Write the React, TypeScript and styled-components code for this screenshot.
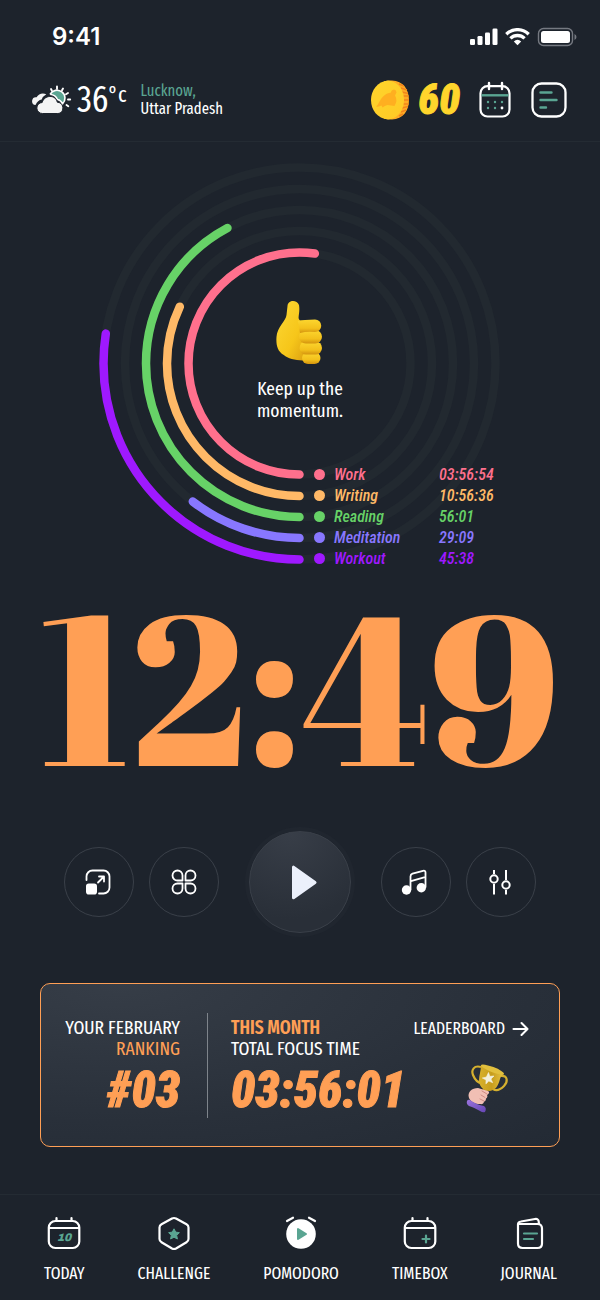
import React from "react";
import styled, { createGlobalStyle } from "styled-components";

const narrow = `"Fira Sans Extra Condensed", "Roboto Condensed", Roboto, sans-serif`;
const legendFont = `"Roboto Condensed", Roboto, sans-serif`;
const mint = "#5aa592";
const orange = "#ff9f55";
const line = "#242b33";

const GlobalStyle = createGlobalStyle`
  * { box-sizing: border-box; }
  body { margin: 0; background: #1d232c; color: #fff; font-family: ${narrow}; }
  button { margin: 0; padding: 0; border: 0; background: none; color: inherit; font: inherit; cursor: pointer; }
  a { color: inherit; text-decoration: none; }
  svg { display: block; }
  h1, p, ul, dl, dd, dt { margin: 0; padding: 0; }
`;

const Screen = styled.div`
  min-height: 100vh;
  display: flex;
  flex-direction: column;
`;

const StatusBar = styled.div`
  display: flex;
  align-items: center;
  justify-content: space-between;
  height: 72px;
  padding: 2px 22px 0 52px;
`;

const Clock = styled.time`
  font: 600 24px/28px Inter, sans-serif;
`;

const StatusIcons = styled.div`
  display: flex;
  align-items: center;
  gap: 7px;
`;

const Header = styled.header`
  display: flex;
  align-items: center;
  justify-content: space-between;
  height: 70px;
  padding: 0 33px 14px 32px;
  border-bottom: 1px solid ${line};
`;

const Weather = styled.div`
  display: flex;
  align-items: center;
`;

const Temperature = styled.span`
  display: flex;
  margin: 0 14px 0 5px;
  font-size: 36px;
  line-height: 36px;
`;

const Unit = styled.span`
  font-size: 22px;
  line-height: 26px;
`;

const Place = styled.p`
  font-size: 16px;
  line-height: 18px;
`;

const City = styled.span`
  display: block;
  color: ${mint};
`;

const HeaderActions = styled.div`
  display: flex;
  align-items: center;
`;

const Heavy = styled.span<{ $size: number; $color: string }>`
  font-family: ${legendFont};
  font-size: ${(p) => p.$size}px;
  line-height: 44px;
  font-weight: 900;
  font-style: italic;
  color: ${(p) => p.$color};
  -webkit-text-stroke: 1px ${(p) => p.$color};
`;

const Coins = styled.div`
  display: flex;
  align-items: center;
  gap: 8px;
  margin-right: 18px;
`;

const HeaderButton = styled.button`
  & + & { margin-left: 19px; }
`;

const Main = styled.main`
  display: flex;
  flex-direction: column;
  align-items: center;
  flex: 1;
`;

const Activity = styled.section`
  display: grid;
  grid-template-columns: 400px;
  margin-top: 20px;
`;

const Rings = styled.svg`
  grid-area: 1 / 1;
`;

const Message = styled.div`
  grid-area: 1 / 1;
  display: flex;
  flex-direction: column;
  align-items: center;
  gap: 12px;
  padding-top: 138px;
  text-align: center;
  font-size: 19px;
  line-height: 22px;
`;

const Legend = styled.dl`
  grid-area: 1 / 1;
  align-self: end;
  padding-left: 214px;
  font: italic 500 16px/21px ${legendFont};
`;

const LegendRow = styled.div<{ $color: string }>`
  display: grid;
  grid-template-columns: 20px 105px 1fr;
  align-items: center;
  color: ${(p) => p.$color};
  &::before {
    content: "";
    width: 11px;
    height: 11px;
    border-radius: 50%;
    background: currentColor;
  }
`;

const Timer = styled.h1`
  font: 400 211px/232px "Abril Fatface", "Liberation Serif", serif;
  color: ${orange};
`;

const Controls = styled.div`
  display: flex;
  align-items: center;
  gap: 30px;
  margin-top: 30px;
`;

const ControlPair = styled.div`
  display: flex;
  gap: 15px;
`;

const RoundButton = styled.button<{ $primary?: boolean }>`
  display: grid;
  place-items: center;
  width: ${(p) => (p.$primary ? 102 : 70)}px;
  height: ${(p) => (p.$primary ? 102 : 70)}px;
  border: 1px solid #3a4049;
  border-radius: 50%;
  ${(p) =>
    p.$primary &&
    `background: radial-gradient(circle at 40% 0%, #383e48, #292f38 75%);
     box-shadow: 0 0 0 4px #20262f;`}
`;

const Card = styled.section`
  display: flex;
  align-self: stretch;
  margin: 50px 40px 0;
  padding: 29px 30px 28px 20px;
  border: 1px solid ${orange};
  border-radius: 10px;
  background: radial-gradient(ellipse at 15% 0%, #363d47, #29303a 60%, #232a34);
`;

const CardTitle = styled.p`
  font-size: 19px;
  line-height: 21px;
`;

const Accent = styled.span<{ $bold?: boolean }>`
  display: block;
  color: ${orange};
  font-weight: ${(p) => (p.$bold ? 600 : 400)};
`;

const Ranking = styled.div`
  display: flex;
  flex-direction: column;
  width: 147px;
  height: 105px;
  gap: 10px;
  padding: 4px 27px 0 0;
  border-right: 1px solid #7e848b;
  text-align: right;
  white-space: nowrap;
`;

const Focus = styled.div`
  display: flex;
  flex-direction: column;
  flex: 1;
  gap: 10px;
  padding: 4px 0 0 23px;
  white-space: nowrap;
`;

const Leader = styled.div`
  display: flex;
  flex-direction: column;
  align-items: flex-end;
  gap: 24px;
  padding: 5px 0 0;
`;

const LeaderLink = styled.a`
  display: flex;
  align-items: center;
  gap: 7px;
  font-size: 17px;
  line-height: 21px;
`;

const Prize = styled.div`
  padding-right: 20px;
`;

const Nav = styled.nav`
  display: flex;
  justify-content: space-between;
  height: 106px;
  padding: 21px 43px 0 44px;
  border-top: 1px solid ${line};
`;

const NavItem = styled.a`
  display: flex;
  flex-direction: column;
  align-items: center;
  gap: 12px;
  font-size: 17px;
  line-height: 20px;
`;

const W = { fill: "none", stroke: "#fff", strokeWidth: 2.2, strokeLinecap: "round", strokeLinejoin: "round" } as const;
const M = { ...W, stroke: mint } as const;

// sweep: degrees of the ring that are filled, clockwise from the bottom
const activities = [
  { name: "Work", time: "03:56:54", color: "#ff708d", r: 111, sweep: 188 },
  { name: "Writing", time: "10:56:36", color: "#ffb967", r: 132.5, sweep: 115.4 },
  { name: "Reading", time: "56:01", color: "#67d267", r: 153.5, sweep: 152 },
  { name: "Meditation", time: "29:09", color: "#8877ff", r: 174.5, sweep: 37.7 },
  { name: "Workout", time: "45:38", color: "#9f19ff", r: 196, sweep: 98.8 },
];

function ActivityRings() {
  return (
    <Rings width="400" height="407" viewBox="100 162 400 407" overflow="visible" fill="none" strokeWidth="8.5" strokeLinecap="round" aria-hidden="true">
      {activities.map((a) => (
        <circle key={a.name} cx="299.500" cy="363.500" r={a.r} stroke="#222930" />
      ))}
      {activities.map((a) => (
        <circle
          key={a.name}
          cx="299.500"
          cy="363.500"
          r={a.r}
          stroke={a.color}
          pathLength="360"
          strokeDasharray={`${a.sweep} 360`}
          transform="rotate(90 299.500 363.500)"
        />
      ))}
    </Rings>
  );
}

function StatusGlyphs() {
  return (
    <StatusIcons aria-label="Signal, Wi-Fi and battery">
      <svg width="29" height="18" fill="#fff">
        <rect x="1" y="11" width="5" height="6" rx="1.3" />
        <rect x="8.500" y="8" width="5" height="9" rx="1.3" />
        <rect x="16" y="4.500" width="5" height="12.500" rx="1.3" />
        <rect x="23.500" y="0.500" width="5" height="16.500" rx="1.3" />
      </svg>
      <svg width="25" height="18" viewBox="0 0 25 18" fill="none" stroke="#fff" strokeWidth="3.300">
        <path d="M1.300 6.200a16 16 0 0 1 22.400 0" />
        <path d="M5.400 10.400a10.200 10.200 0 0 1 14.200 0" />
        <path d="M8.800 13.400a5.600 5.600 0 0 1 7.400 0L12.500 17.200z" fill="#fff" stroke="none" />
      </svg>
      <svg width="41" height="20" viewBox="0 0 41 20">
        <rect x="1.500" y="1.500" width="34" height="17" rx="5" fill="none" stroke="#757981" strokeWidth="1.400" />
        <rect x="4" y="4" width="29" height="12" rx="2.500" fill="#fff" />
        <path d="M37.500 7v6q2-1 2-3t-2-3" fill="#757981" />
      </svg>
    </StatusIcons>
  );
}

function WeatherIcon() {
  return (
    <svg width="40" height="30" viewBox="0 0 40 30" aria-hidden="true">
      <g stroke="#fff" strokeWidth="1.900" strokeLinecap="round">
        <path d="M19 4l.8 1.500M25 1.500v2.500M31 3.500l-1 1.800M36 8l-2 1.200M36 14.500h2.200M34.500 20l1.800 1.200" />
      </g>
      <path d="M18 9.300a8 8 0 1 1 12.500 9.700q-1.500-3.800-5-4.500-1.800-4.500-7.500-5.200" fill={mint} stroke="#fff" strokeWidth="1.600" strokeLinejoin="round" />
      <path d="M3.500 20a3.900 3.900 0 0 1 1.100-7.800C6.500 8.500 11 7.500 14.300 9.300q-3.500 2-4.600 5.200-3.900.7-6.200 5.500" fill="#f4f4f4" />
      <path d="M10.500 28.500a5.500 5.500 0 0 1-.3-11C12 10 23.500 9 25.300 17.200c7.500.4 7.200 11.300.5 11.300z" fill="#f4f4f4" stroke="#1d232c" strokeWidth="1" />
    </svg>
  );
}

function CoinIcon() {
  return (
    <svg width="40" height="40" viewBox="0 0 40 40" aria-hidden="true">
      <defs>
        <linearGradient id="coin" x1="0" y1="0" x2="1" y2="1">
          <stop offset="0" stopColor="#ffd52c" />
          <stop offset="1" stopColor="#ffc925" />
        </linearGradient>
      </defs>
      <path d="M14 1.200q4-.9 8-.7C33 1 39 9 39 20s-6 19-17 19.500q-4 0-8-.7z" fill="#ffac24" />
      <path d="M29 4l5 2M31 8l6 2M32 12l6 1.500M32.500 16h6.200M33 20h6M32.500 24h6.200M32 28l6-1.500M31 32l5-2M29 36l4-2" stroke="#f2851c" strokeWidth="1.400" />
      <path d="M18 .5C26 1 34 8 34 20s-8 19-16 19.500C7.500 38.500 1 30 1 20S7.500 1.500 18 .5" fill="url(#coin)" />
      <path d="M6 26.500C10 24 10 14.500 21 12.500q0-2.500 3-3 2.500.5 2.500 3l-1.500 3q3 5-.5 10.500l-7-1q-3 .5-5 2.500l-1-2q-2.500 1.500-5.500 1" fill="#ffaf20" />
    </svg>
  );
}

function CalendarIcon() {
  return (
    <svg width="34" height="38" viewBox="0 0 34 38" aria-hidden="true">
      <rect x="2.500" y="5.200" width="29" height="30.300" rx="7" {...W} />
      <path d="M3.500 14.300h27" {...M} strokeLinecap="butt" strokeWidth="2.400" />
      <path d="M11 2v6M24 2v6" {...W} strokeWidth="2.400" />
      <g fill={mint}>
        <circle cx="10" cy="21" r="1.200" />
        <circle cx="17" cy="21" r="1.200" />
        <circle cx="24" cy="21" r="1.200" />
        <circle cx="10" cy="27" r="1.200" />
        <circle cx="17" cy="27" r="1.200" />
      </g>
      <circle cx="24" cy="27" r="1.400" fill="#fff" />
    </svg>
  );
}

function NotesIcon() {
  return (
    <svg width="36" height="38" viewBox="0 0 36 38" aria-hidden="true">
      <rect x="1.500" y="2.500" width="33" height="33" rx="9" {...W} strokeWidth="2.300" />
      <path d="M9.500 11.500h11M9.500 19h16M9.500 26.500h5.500" {...M} strokeWidth="2.400" />
    </svg>
  );
}

function ThumbIcon() {
  return (
    <svg width="50" height="66" viewBox="0 0 50 66" role="img" aria-label="Thumbs up">
      <defs>
        <linearGradient id="thumb" x1="0" y1="0" x2="1" y2="1">
          <stop offset="0" stopColor="#fdd835" />
          <stop offset="0.6" stopColor="#f6c61a" />
          <stop offset="1" stopColor="#d99c10" />
        </linearGradient>
        <linearGradient id="finger" x1="0" y1="0" x2="0" y2="1">
          <stop offset="0" stopColor="#fcd62f" />
          <stop offset="0.65" stopColor="#f3c01b" />
          <stop offset="1" stopColor="#d3930f" />
        </linearGradient>
      </defs>
      <path d="M12.500 6C13 -.5 22 -.5 24 5c1 6-.5 10-.4 13 .2 2.500 2.700 3.500 6.200 3.500l3 36-5 3c-8-.5-15-2-19-5.500C2 51 1 44 1.500 37 2 27 11 21 11.500 15z" fill="url(#thumb)" />
      <rect x="27" y="52" width="18.500" height="12" rx="6" fill="url(#finger)" />
      <rect x="24.500" y="41.500" width="22.500" height="13" rx="6.400" fill="url(#finger)" />
      <rect x="24" y="30" width="23" height="13.500" rx="6.700" fill="url(#finger)" />
      <path d="M22.800 21q6-1.500 17.200-1.500a6.200 6.200 0 0 1 0 12.500q-8-1-15 1z" fill="url(#finger)" />
    </svg>
  );
}

function ResizeIcon() {
  return (
    <svg width="28" height="26" viewBox="1 0 28 26" aria-hidden="true">
      <path d="M1.500 11V7.500a6 6 0 0 1 6-6h11a6 6 0 0 1 6 6v11a6 6 0 0 1-6 6H14M13 13.500L18.500 8M14 7.500h5V12.500" transform="translate(1)" {...W} strokeWidth="1.800" />
      <rect x="2" y="14.500" width="11" height="11" rx="2.800" fill="#fff" />
    </svg>
  );
}

function PetalsIcon() {
  return (
    <svg width="26" height="26" viewBox="0 0 26 26" aria-hidden="true">
      <path d="M11.500 11.500V6.500a5 5 0 1 0-5 5zM14.500 11.500V6.500a5 5 0 1 1 5 5zM11.500 14.500V19.500a5 5 0 1 1-5-5zM14.500 14.500V19.500a5 5 0 1 0 5-5z" {...W} strokeWidth="1.800" />
    </svg>
  );
}

function PlayIcon() {
  return (
    <svg width="34" height="36" viewBox="0 0 34 36" aria-hidden="true">
      <path d="M10.500 3.200v30.600L32 18.500z" fill="#ebf0fb" stroke="#ebf0fb" strokeWidth="3" strokeLinejoin="round" />
    </svg>
  );
}

function MusicIcon() {
  return (
    <svg width="30" height="28" viewBox="0 0 30 28" aria-hidden="true">
      <path d="M9.500 21.500V8.500q0-2.200 2-2.800L22 2.800q2.500-.7 2.500 1.800V19M10 13.200l14-4" {...W} strokeWidth="1.800" />
      <circle cx="5.500" cy="22" r="4.700" fill="#fff" />
      <circle cx="20.300" cy="19.700" r="4.700" fill="#fff" />
    </svg>
  );
}

function SlidersIcon() {
  return (
    <svg width="26" height="28" viewBox="0 0 26 28" aria-hidden="true">
      <path d="M6 2v4M6 16v10.500M18 2v10M18 22v4.500" {...W} strokeLinecap="butt" strokeWidth="2" />
      <circle cx="6" cy="11" r="3.700" {...W} strokeWidth="2" />
      <circle cx="18" cy="17" r="3.700" {...W} strokeWidth="2" />
    </svg>
  );
}

function ArrowIcon() {
  return (
    <svg width="17" height="16" viewBox="0 0 17 16" aria-hidden="true">
      <path d="M1.500 8h13.500M9.500 2l6 6-6 6" {...W} strokeWidth="2.100" />
    </svg>
  );
}

function TrophyIcon() {
  return (
    <svg width="44" height="50" viewBox="0 0 44 50" role="img" aria-label="Trophy">
      <defs>
        <linearGradient id="cup" x1="0" y1="0" x2="1" y2="0">
          <stop offset="0" stopColor="#d8b12c" />
          <stop offset="0.5" stopColor="#c79d1c" />
          <stop offset="1" stopColor="#e8c444" />
        </linearGradient>
        <linearGradient id="sleeve" x1="0" y1="0" x2="1" y2="1">
          <stop offset="0" stopColor="#9b74de" />
          <stop offset="1" stopColor="#6546b4" />
        </linearGradient>
      </defs>
      <path d="M16 4C9 2 6 7 8 12s5 8 9 8M36 13c7-.500 7 6 3 10s-8 5-11 3" fill="none" stroke="#d5b02f" strokeWidth="2.200" />
      <path d="M19 24l4 2-2 7-6-2z" fill="#b58a18" />
      <path d="M16 2l23 9c-2 1-3 2-4 5-2 8-5 11-10 12-6 0-11-4-11-11 0-5 2-9 2-15" fill="url(#cup)" />
      <ellipse cx="27.500" cy="6.500" rx="12.300" ry="2.600" transform="rotate(21 27.500 6.500)" fill="#e2c03e" />
      <path d="M23.500 9.500l1.300 3.800 4.200-.3-3 3 1.700 3.700-3.900-1.600-2.900 2.800.1-4-3.700-1.900 4.100-1z" fill="#f3f0dc" stroke="#f3f0dc" strokeWidth=".6" />
      <path d="M4 35c-2-6 3-10 9-10l10 3c2 1 1 3-1 4 1 1 0 3-1 3.500 0 2-1 3-2 3 0 2-2 3-4 2.500-5 0-9-2-11-6" fill="#f1bfb4" />
      <path d="M17 28l5 3M16 32l4 2.500M15 36l4 2" stroke="#cf8a82" strokeWidth="1" strokeLinecap="round" />
      <path d="M2 38q1-2 3-1 7 5 14 6 3 2 1 6-2 1-5-1-7-4-11-5-3-2-2-5" fill="url(#sleeve)" />
    </svg>
  );
}

function CalendarBase() {
  return (
    <>
      <rect x="1.800" y="5" width="30.500" height="27" rx="6.500" {...W} />
      <path d="M2.500 12h29M9.500 2v3M24.500 2v3" {...W} />
    </>
  );
}

function NavIcon({ name }: { name: string }) {
  return (
    <svg width="34" height="36" viewBox="0 0 34 36" aria-hidden="true">
      {name === "TODAY" && (
        <>
          <CalendarBase />
          <text x="17" y="25" textAnchor="middle" fontFamily="Archivo Black, DejaVu Sans" fontStyle="italic" fontWeight="400" fontSize="11" fill={mint}>
            10
          </text>
        </>
      )}
      {name === "CHALLENGE" && (
        <>
          <path d="M15 2.500q2-1 4 0l10.500 5.800q2 1.100 2 3.200v11.500q0 2.100-2 3.200L19 32.500q-2 1-4 0L4.500 26.200q-2-1.100-2-3.200V11.500q0-2.100 2-3.200z" {...W} />
          <path d="M17 12.800l1.700 3.300 3.700.6-2.700 2.600.7 3.700-3.400-1.800-3.400 1.800.7-3.700-2.700-2.600 3.700-.6z" fill={mint} stroke={mint} strokeWidth="1" strokeLinejoin="round" />
        </>
      )}
      {name === "POMODORO" && (
        <>
          <circle cx="17" cy="18" r="14.800" fill="#fff" />
          <path d="M3 5L9 1.700M25 1.700l6 3.300" {...W} />
          <path d="M14 13v10l8-5z" fill={mint} stroke={mint} strokeWidth="2" strokeLinejoin="round" />
        </>
      )}
      {name === "TIMEBOX" && (
        <>
          <CalendarBase />
          <path d="M23 19.500v7M19.500 23h7" {...M} />
        </>
      )}
      {name === "JOURNAL" && (
        <>
          <path d="M6.500 8h19q4.500 0 4.500 4.500v15q0 4.500-4.500 4.500h-15q-4.500 0-4.500-4.500V8.500q0-2.600 3-3L23 3q3.500-.5 3.800 3V8" {...W} />
          <path d="M12 17.500h13M12 23h9" {...M} />
        </>
      )}
    </svg>
  );
}

const tabs = ["TODAY", "CHALLENGE", "POMODORO", "TIMEBOX", "JOURNAL"];

export default function App() {
  return (
    <Screen>
      <GlobalStyle />
      <StatusBar>
        <Clock>9:41</Clock>
        <StatusGlyphs />
      </StatusBar>
      <Header>
        <Weather>
          <WeatherIcon />
          <Temperature>
            36<Unit>°c</Unit>
          </Temperature>
          <Place>
            <City>Lucknow,</City>
            Uttar Pradesh
          </Place>
        </Weather>
        <HeaderActions>
          <Coins>
            <CoinIcon />
            <Heavy $size={42} $color="#ffd52c">60</Heavy>
          </Coins>
          <HeaderButton aria-label="Calendar"><CalendarIcon /></HeaderButton>
          <HeaderButton aria-label="Notes"><NotesIcon /></HeaderButton>
        </HeaderActions>
      </Header>
      <Main>
        <Activity aria-label="Activities">
          <ActivityRings />
          <Message>
            <ThumbIcon />
            <p>
              Keep up the
              <br />
              momentum.
            </p>
          </Message>
          <Legend>
            {activities.map((a) => (
              <LegendRow key={a.name} $color={a.color}>
                <dt>{a.name}</dt>
                <dd>{a.time}</dd>
              </LegendRow>
            ))}
          </Legend>
        </Activity>
        <Timer>12:49</Timer>
        <Controls>
          <ControlPair>
            <RoundButton aria-label="Resize"><ResizeIcon /></RoundButton>
            <RoundButton aria-label="Categories"><PetalsIcon /></RoundButton>
          </ControlPair>
          <RoundButton $primary aria-label="Start"><PlayIcon /></RoundButton>
          <ControlPair>
            <RoundButton aria-label="Music"><MusicIcon /></RoundButton>
            <RoundButton aria-label="Settings"><SlidersIcon /></RoundButton>
          </ControlPair>
        </Controls>
        <Card>
          <Ranking>
            <CardTitle>
              YOUR FEBRUARY
              <Accent>RANKING</Accent>
            </CardTitle>
            <Heavy $size={49} $color={orange}>#03</Heavy>
          </Ranking>
          <Focus>
            <CardTitle>
              <Accent $bold>THIS MONTH</Accent>
              TOTAL FOCUS TIME
            </CardTitle>
            <Heavy $size={49} $color={orange}>03:56:01</Heavy>
          </Focus>
          <Leader>
            <LeaderLink href="#leaderboard">
              LEADERBOARD
              <ArrowIcon />
            </LeaderLink>
            <Prize><TrophyIcon /></Prize>
          </Leader>
        </Card>
      </Main>
      <Nav>
        {tabs.map((t) => (
          <NavItem key={t} href={`#${t.toLowerCase()}`}>
            <NavIcon name={t} />
            {t}
          </NavItem>
        ))}
      </Nav>
    </Screen>
  );
}
